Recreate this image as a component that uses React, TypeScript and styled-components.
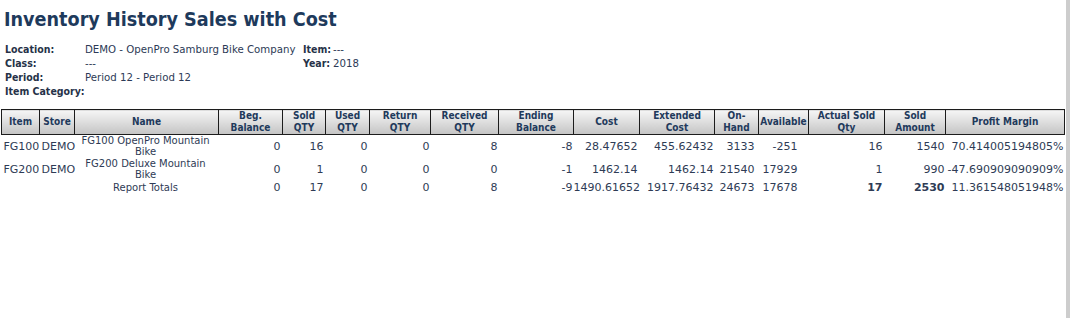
import styled, { createGlobalStyle } from 'styled-components';

const GlobalStyle = createGlobalStyle`
  html, body, #root {
    margin: 0;
    padding: 0;
    height: 100%;
    background: #ffffff;
  }
  body {
    font-family: "DejaVu Sans", Verdana, sans-serif;
    color: #2c3a56;
  }
`;

const Page = styled.div`
  display: flex;
  min-height: 100%;
`;

const Main = styled.div`
  flex: 1;
  display: flex;
  flex-direction: column;
`;

const ScrollStrip = styled.div`
  width: 4px;
  background: #cdcdcd;
`;

const Title = styled.h1`
  margin: 0;
  padding: 7px 0 0 4px;
  font-family: "DejaVu Sans Condensed", "DejaVu Sans", sans-serif;
  font-size: 19.6px;
  font-weight: bold;
  line-height: 25px;
  color: #1e3a5c;
`;

const InfoGrid = styled.div`
  display: grid;
  grid-template-columns: 80px 218px 30px auto;
  grid-auto-rows: 14px;
  margin: 10px 0 0 5px;
  align-items: center;
`;

const InfoLabel = styled.div`
  font-family: "DejaVu Sans Condensed", "DejaVu Sans", sans-serif;
  font-size: 10.5px;
  font-weight: bold;
  color: #263248;
  white-space: nowrap;
`;

const InfoValue = styled.div`
  font-size: 10.2px;
  color: #2c3a56;
  white-space: nowrap;
`;

const ReportTable = styled.table`
  margin: 11px 0 0 1px;
  width: 1063px;
  table-layout: fixed;
  border-collapse: collapse;
`;

const HeadCell = styled.th`
  border: 1px solid #1c1c1c;
  background: linear-gradient(#f5f5f5, #c4c4c4);
  font-family: "DejaVu Sans Condensed", "DejaVu Sans", sans-serif;
  font-size: 10px;
  font-weight: bold;
  line-height: 12px;
  height: 24px;
  padding: 0 1px;
  color: #1f3a5c;
  text-align: center;
  vertical-align: middle;
`;

type CellProps = {
  $align?: 'left' | 'center' | 'right';
  $small?: boolean;
  $bold?: boolean;
  $pad?: number;
  $lead?: number;
};

const Cell = styled.td<CellProps>`
  padding: 1px ${(p) => p.$pad ?? 2}px 1px ${(p) => p.$lead ?? 0}px;
  font-size: ${(p) => (p.$small ? '10px' : '11px')};
  line-height: ${(p) => (p.$small ? '10.5px' : '12px')};
  font-weight: ${(p) => (p.$bold ? 'bold' : 'normal')};
  text-align: ${(p) => p.$align ?? 'right'};
  vertical-align: middle;
  color: #2e3b55;
  white-space: ${(p) => (p.$small ? 'normal' : 'nowrap')};
  overflow: visible;
`;

const widths = [38, 35, 144, 64, 43, 44, 61, 68, 75, 66, 75, 44, 50, 76, 61, 119];

const headers = [
  ['Item'],
  ['Store'],
  ['Name'],
  ['Beg.', 'Balance'],
  ['Sold', 'QTY'],
  ['Used', 'QTY'],
  ['Return', 'QTY'],
  ['Received', 'QTY'],
  ['Ending', 'Balance'],
  ['Cost'],
  ['Extended', 'Cost'],
  ['On-', 'Hand'],
  ['Available'],
  ['Actual Sold', 'Qty'],
  ['Sold', 'Amount'],
  ['Profit Margin'],
];

type Row = {
  item: string;
  store: string;
  name: string;
  values: string[];
  total?: boolean;
};

const rows: Row[] = [
  {
    item: 'FG100',
    store: 'DEMO',
    name: 'FG100 OpenPro Mountain Bike',
    values: ['0', '16', '0', '0', '8', '-8', '28.47652', '455.62432', '3133', '-251', '16', '1540', '70.414005194805%'],
  },
  {
    item: 'FG200',
    store: 'DEMO',
    name: 'FG200 Deluxe Mountain Bike',
    values: ['0', '1', '0', '0', '0', '-1', '1462.14', '1462.14', '21540', '17929', '1', '990', '-47.690909090909%'],
  },
  {
    item: '',
    store: '',
    name: 'Report Totals',
    values: ['0', '17', '0', '0', '8', '-9', '1490.61652', '1917.76432', '24673', '17678', '17', '2530', '11.361548051948%'],
    total: true,
  },
];

// right padding per numeric column, so figures end where the report prints them
const numPad = [2, 2, 2, 1, 1, 1, 2, 1, 4, 11, 2, 1, 1];

const App = () => {
  return (
    <Page>
      <GlobalStyle />
      <Main>
        <Title>Inventory History Sales with Cost</Title>
        <InfoGrid>
          <InfoLabel>Location:</InfoLabel>
          <InfoValue>DEMO - OpenPro Samburg Bike Company</InfoValue>
          <InfoLabel>Item:</InfoLabel>
          <InfoValue>---</InfoValue>
          <InfoLabel>Class:</InfoLabel>
          <InfoValue>---</InfoValue>
          <InfoLabel>Year:</InfoLabel>
          <InfoValue>2018</InfoValue>
          <InfoLabel>Period:</InfoLabel>
          <InfoValue>Period 12 - Period 12</InfoValue>
          <div />
          <div />
          <InfoLabel>Item Category:</InfoLabel>
        </InfoGrid>
        <ReportTable>
          <colgroup>
            {widths.map((w, i) => (
              <col key={i} style={{ width: w }} />
            ))}
          </colgroup>
          <thead>
            <tr>
              {headers.map((h, i) => (
                <HeadCell key={i}>
                  {h.map((line, j) => (
                    <div key={j}>{line}</div>
                  ))}
                </HeadCell>
              ))}
            </tr>
          </thead>
          <tbody>
            {rows.map((r, i) => (
              <tr key={i}>
                <Cell $align="left" $pad={0} $lead={2}>{r.item}</Cell>
                <Cell $align="left" $pad={0} $lead={2}>{r.store}</Cell>
                <Cell $align="center" $small>{r.name}</Cell>
                {r.values.map((v, j) => (
                  <Cell key={j} $pad={numPad[j]} $bold={r.total && (j === 10 || j === 11)}>
                    {v}
                  </Cell>
                ))}
              </tr>
            ))}
          </tbody>
        </ReportTable>
      </Main>
      <ScrollStrip />
    </Page>
  );
};

export default App;
